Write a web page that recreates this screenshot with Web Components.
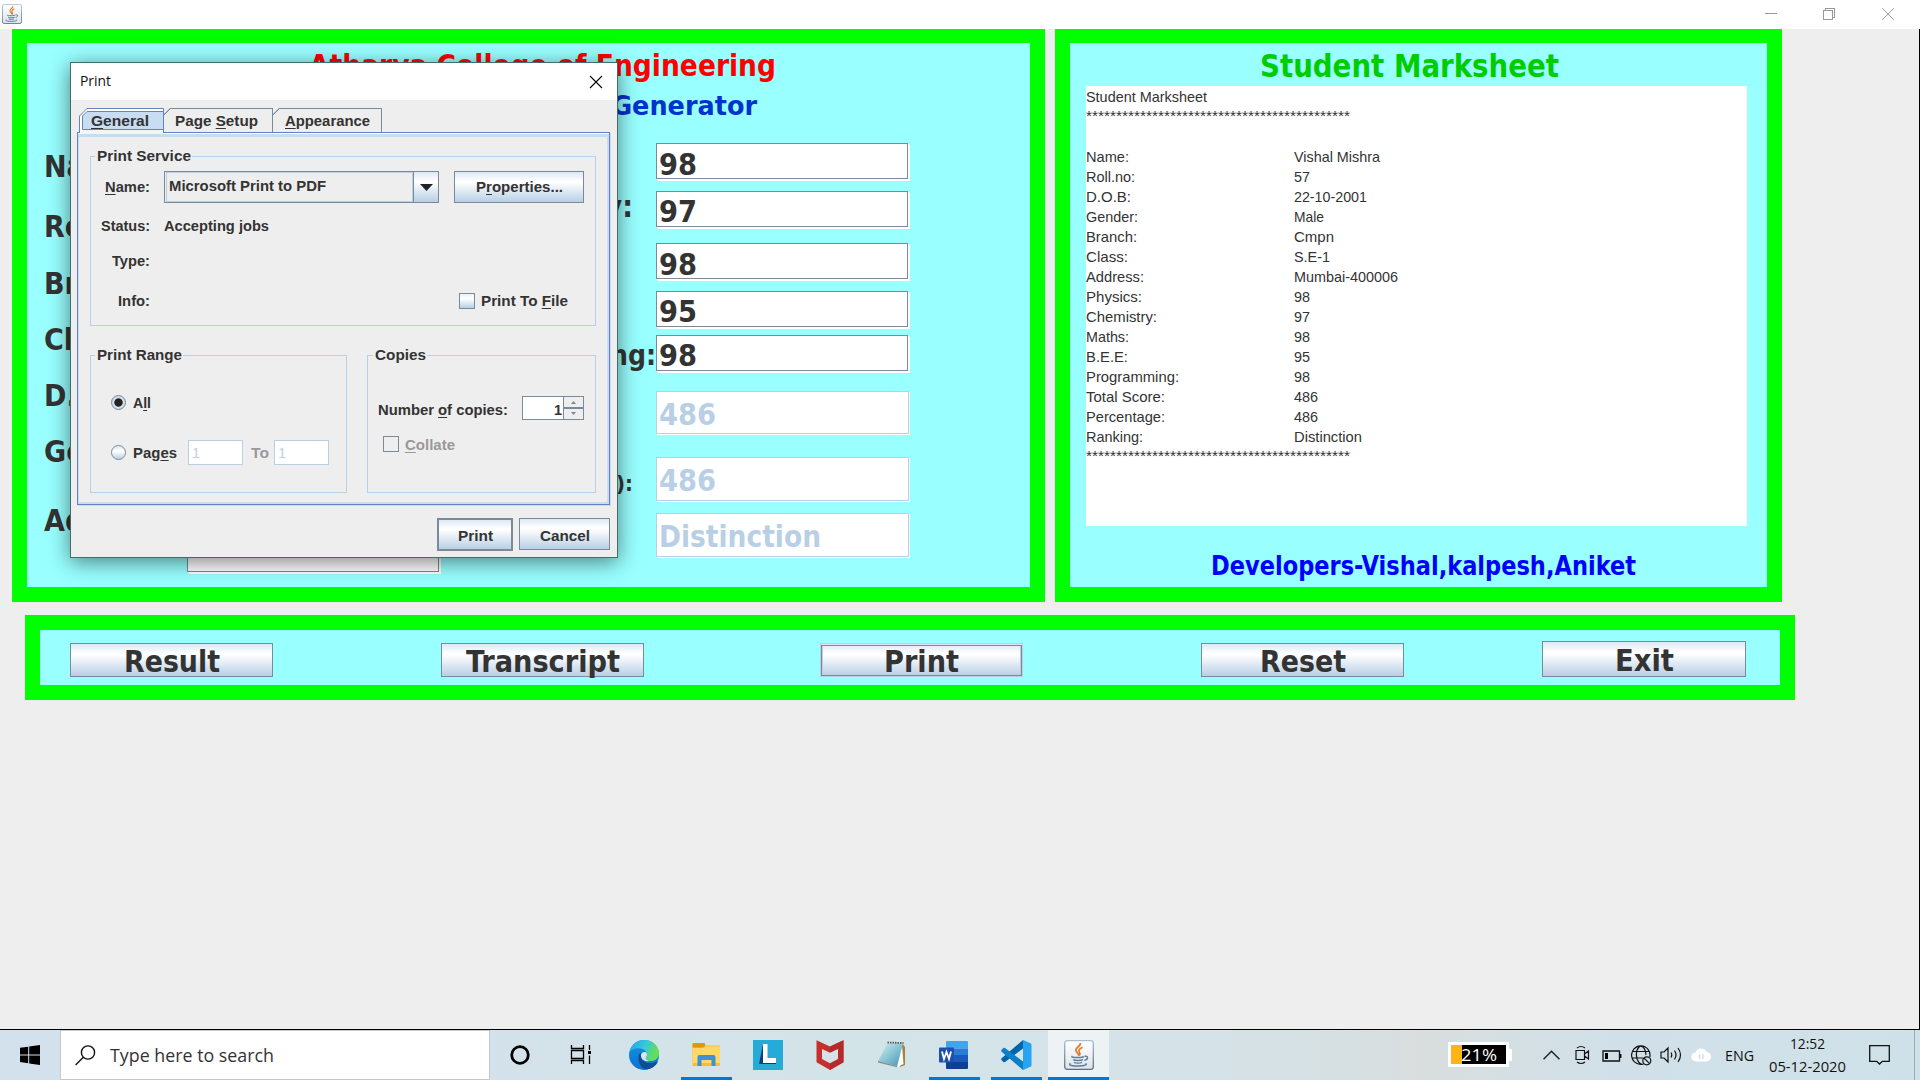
<!DOCTYPE html>
<html lang="en">
<head>
<meta charset="utf-8">
<title>Student Marksheet</title>
<style>
html,body{margin:0;height:100%;overflow:hidden}
body{background:#eee;font-family:"Liberation Sans",Arial,sans-serif;color:#333}
</style>
</head>
<body>
<marks-app></marks-app>
<script>
const define = (name, html, ready) => {
  const t = document.createElement('template');
  t.innerHTML = html;
  customElements.define(name, class extends HTMLElement {
    connectedCallback() {
      if (this.shadowRoot) return;
      this.attachShadow({mode: 'open'}).appendChild(t.content.cloneNode(true));
      if (ready) ready.call(this, this.shadowRoot);
    }
  });
};

/* Text run squeezed or stretched to a fixed advance width (natural width when w is absent). */
define('fit-text', `<style>
:host{display:block;flex:none;height:var(--h,20px);line-height:var(--h,20px);white-space:nowrap}
:host([face=form]){font-family:"DejaVu Sans Condensed","DejaVu Sans",sans-serif;font-stretch:condensed;font-weight:700;--h:30px}
:host([face=bold]){font-weight:700;font-size:15px}
:host([face=ui]){font-family:"Open Sans","Noto Sans",sans-serif;color:#111}
span{display:inline-block;transform-origin:0 50%}
::slotted(u){text-decoration-thickness:1px;text-underline-offset:2px}
</style><span><slot></slot></span>`, function (r) {
  const s = r.querySelector('span');
  if (this.hasAttribute('size')) this.style.fontSize = this.getAttribute('size') + 'px';
  if (!this.hasAttribute('w')) return;
  const w = +this.getAttribute('w');
  this.style.width = w + 'px';
  s.style.transform = 'scaleX(' + w / s.getBoundingClientRect().width + ')';
});

define('java-icon', `<style>:host{display:block;flex:none}svg{display:block;width:100%;height:100%}</style>
<svg viewBox="0 0 30 30"><defs><linearGradient id="g" x2="0" y2="1"><stop stop-color="#fff"/><stop offset="1" stop-color="#dfe3e6"/></linearGradient><linearGradient id="e" x2="0" y2="1"><stop stop-color="#a9bfd0"/><stop offset="1" stop-color="#567087"/></linearGradient></defs>
<rect x=".7" y=".7" width="28.6" height="28.6" rx="2.5" fill="url(#g)" stroke="url(#e)" stroke-width="1.3"/>
<path d="M16.2 3c1.300 2.800-5 4.500-4.300 7.500.3 1.700 2.500 2.800 3.100 5.200M18.600 7.200c-3 1.300-4.600 2.900-3.200 5.200.7 1.100.8 2.200-.4 3.300" fill="none" stroke="#e8792b" stroke-width="1.7"/>
<path d="M8.500 16.300c-2 .9 1.500 1.300 5.500 1.200 3 0 5.500-.5 5.900-.9M9.200 19.700c1.500 1.200 7.500 1.200 9.800 0M10 22.300c2 1 6 1 8 0M20.500 16.300c4-1 4 3.300-.2 3.900M6.500 23.400c-3 1.900 2.500 2.700 8 2.600 6-.1 9.500-1.400 7-2.500" fill="none" stroke="#5b7f9e" stroke-width="1.500"/></svg>`);

define('title-bar', `<style>
:host{display:flex;height:29px;background:#fff;align-items:flex-start}
java-icon{width:20px;height:20px;margin:4px 0 0 2px}
svg{margin:7px 0 0 auto;width:156px;height:16px;display:block}
</style><java-icon></java-icon>
<svg viewBox="0 0 156 16" fill="none" stroke="#999" shape-rendering="crispEdges"><path d="M1 6.500h12M59.500 3.500h9v9h-9zM61.500 3.500v-2h9v9h-2"/><path shape-rendering="auto" d="M118.300 1.300l11.500 11.500M129.800 1.300l-11.500 11.500"/></svg>`);

define('swing-panel', `<style>
:host{display:flex;flex-direction:column;flex:none;box-sizing:border-box;background:#9ff;border:15px solid #0f0}
</style><slot></slot>`);

define('swing-field', `<style>
:host{display:flex;align-items:center;box-sizing:border-box;flex:none;width:252px;height:36px;background:#fff;border:1px solid #7a8a99;box-shadow:1px 1px #fff,2px 2px #fff;padding:8px 0 0 2px;color:#333}
:host([disabled]){border-color:#b8cfe5;color:#b8cfe5;width:253px;height:44px;padding-top:4px;box-shadow:1px 1px #fff}
:host([small]){width:55px;height:25px;padding:1px 0 0 3px;box-shadow:none}
</style><slot></slot>`);

define('swing-button', `<style>
:host{display:flex;align-items:center;justify-content:center;box-sizing:border-box;flex:none;border:1px solid #7a8a99;background:linear-gradient(#dde8f3 0,#fff 30%,#fff 34%,#b8cfe5 100%);color:#333;width:203px;height:34px;padding-top:3px}
:host([focused]){border-color:#b8cfe5;box-shadow:inset 0 1px #dde8f3,inset 0 0 0 1px #7a8a99,inset 0 2px #7a8a99,inset 0 0 0 2px #b8cfe5}
:host([primary]){border-width:2px}
:host([dlg]){height:32px;padding-top:0}
</style><slot></slot>`);

define('group-box', `<style>
:host{display:block;flex:none}
fieldset{margin:0;padding:0;box-sizing:border-box;height:100%;width:100%;min-width:0;border:1.500px solid #b8cfe5;display:block}
legend{padding:0 1px 0 2px;margin-left:var(--tx,5px);height:20px}
.c{display:flex;flex-direction:column}
</style><fieldset><legend><slot name="title"></slot></legend><div class="c"><slot></slot></div></fieldset>`);

define('metal-mark', `<style>:host{display:block;flex:none;box-sizing:border-box;width:16px;height:16px;border:1.500px solid #7a8a99;background:linear-gradient(#eaf1f8,#fff 35%,#b8cfe5)}
:host([off]){background:none}
:host([radio]){width:15px;height:15px;border-radius:50%;border-width:1px;background:linear-gradient(#dde8f3,#fff 40%,#b8cfe5)}
:host([on]){background:radial-gradient(circle,#222 3.800px,#dfe8f1 4.600px,#c8d8e8 6px)}
</style>`);

define('print-dialog', `<style>
:host{display:flex;flex-direction:column;box-sizing:border-box;width:548px;height:496px;background:#eee;border:1px solid #456b6b;box-shadow:0 4px 20px rgba(0,0,0,.5)}
.tb{height:37px;background:#fff;display:flex;align-items:center;padding:0 14px 0 9px;justify-content:space-between}
.tb svg{width:14px;height:14px}
.tb fit-text{margin-top:-3px}
.tabs{display:flex;height:24px;margin:8px 0 0 8px;align-items:stretch;z-index:1}
.tab{box-sizing:border-box;height:24px;border:solid #7a8a99;border-width:1px 1px 0 0;display:flex;align-items:center;justify-content:center;width:109px;background:linear-gradient(135deg,transparent 3.500px,#7a8a99 3.500px,#7a8a99 4.600px,transparent 4.600px);clip-path:polygon(6px 0,100% 0,100% 100%,0 100%,0 6px)}
.on{display:grid;width:85px;height:26px}
.on>*{grid-area:1/1}
.on fit-text{margin:3px 0 0 12px}
.pane{height:373px;width:533px;margin-left:6px;box-sizing:border-box;border:1px solid #6382bf;padding:13px 0 0 12px;box-shadow:inset 0 1px #fff,inset 0 4px #c8ddf2,inset -2px -2px #c8ddf2,inset 1px 0 #c8ddf2,1px 1px #c8ddf2}
.r{display:flex;align-items:center}
.lab{width:46px;display:flex;justify-content:flex-end;margin-left:13px;margin-right:14px}
.combo{display:flex;box-sizing:border-box;width:275px;height:32px;border:1px solid #7a8a99}
.val{flex:1;display:flex;align-items:center;border:1px solid #b8cfe5;margin:0 0 0 1px;padding:0 0 2px 2px}
.arr{width:24px;border-left:1px solid #7a8a99;background:linear-gradient(#dde8f3,#fff 32%,#b8cfe5);display:flex;align-items:center;justify-content:center}
.dis{color:#999}
.spin{display:flex;width:62px;height:24px;box-sizing:border-box;border:1px solid #7a8a99;background:#fff;margin-left:14px}
.num{flex:1;display:flex;justify-content:flex-end;align-items:center;padding-right:1px}
.num fit-text{margin-top:3px}
.ar{width:19px;border-left:1px solid #7a8a99;background:#eee;display:flex;flex-direction:column}
.ar svg{flex:1;width:19px}.ar svg+svg{border-top:2px solid #7a8a99}
.groups{display:flex;gap:20px;margin-top:19px}
.act{display:flex;gap:6px;justify-content:flex-end;margin:13px 7px 0 0}
</style>
<div class="tb"><fit-text face="ui" size="15" w="31">Print</fit-text><svg viewBox="0 0 14 14" stroke="#000" stroke-width="1.100"><path d="M1 1l12 12M13 1L1 13"/></svg></div>
<div class="tabs"><div class="on"><svg width="85" height="26"><path d="M1 25.500V8L8 1H84V25.500z" fill="#fff"/><path d="M3 22h82v4H3z" fill="#f4f4f4"/><path d="M.5 25V8L8 .5H84.500V25" fill="none" stroke="#6382bf"/><path d="M3.500 21.500V8L8 3.500H84.500V21.500z" fill="#c8ddf2" stroke="#6382bf"/></svg><fit-text face="bold" w="58"><u>G</u>eneral</fit-text></div><div class="tab"><fit-text face="bold" w="83" style="margin-left:-3px">Page <u>S</u>etup</fit-text></div><div class="tab"><fit-text face="bold" w="85"><u>A</u>ppearance</fit-text></div></div>
<div class="pane">
<group-box style="width:506px;height:180px;--tx:4px"><fit-text slot="title" face="bold" w="94">Print Service</fit-text>
 <div class="r" style="height:32px;margin-top:5px"><div class="lab"><fit-text face="bold" w="45"><u>N</u>ame:</fit-text></div>
 <div class="combo"><div class="val"><fit-text face="bold" w="157">Microsoft Print to PDF</fit-text></div><div class="arr"><svg width="13" height="7"><path d="M0 0h13l-6.500 7z" fill="#222"/></svg></div></div>
 <swing-button dlg style="width:130px;margin-left:15px"><fit-text face="bold" w="87">P<u>r</u>operties...</fit-text></swing-button></div>
 <div class="r" style="height:20px;margin-top:13px"><div class="lab"><fit-text face="bold" w="49">Status:</fit-text></div><fit-text face="bold" w="105">Accepting jobs</fit-text></div>
 <div class="r" style="height:20px;margin-top:15px"><div class="lab"><fit-text face="bold" w="38">Type:</fit-text></div></div>
 <div class="r" style="height:20px;margin-top:20px"><div class="lab"><fit-text face="bold" w="32">Info:</fit-text></div><metal-mark style="margin-left:295px"></metal-mark><fit-text face="bold" w="87" style="margin-left:6px">Print To <u>F</u>ile</fit-text></div>
</group-box>
<div class="groups">
<group-box style="width:257px;height:148px;--tx:4px"><fit-text slot="title" face="bold" w="85">Print Range</fit-text>
 <div class="r" style="height:20px;margin:27px 0 0 20px"><metal-mark radio on></metal-mark><fit-text face="bold" w="18" style="margin:2px 0 0 7px">A<u>l</u>l</fit-text></div>
 <div class="r" style="height:26px;margin:27px 0 0 20px"><metal-mark radio></metal-mark><fit-text face="bold" w="44" style="margin:2px 11px 0 7px">Pag<u>e</u>s</fit-text><swing-field disabled small><fit-text size="15" w="8">1</fit-text></swing-field><fit-text class="dis" face="bold" w="18" style="margin:2px 5px 0 8px">To</fit-text><swing-field disabled small><fit-text size="15" w="8">1</fit-text></swing-field></div>
</group-box>
<group-box style="width:229px;height:148px"><fit-text slot="title" face="bold" w="51">Copies</fit-text>
 <div class="r" style="height:24px;margin:31px 0 0 10px"><fit-text face="bold" w="130" style="margin-top:3px">Number <u>o</u>f copies:</fit-text><div class="spin"><div class="num"><fit-text face="bold" size="15" w="8">1</fit-text></div><div class="ar"><svg viewBox="0 0 19 10"><path d="M7 7h5l-2.500-3z" fill="#7a8a99"/></svg><svg viewBox="0 0 19 10"><path d="M7 3h5l-2.500 3z" fill="#7a8a99"/></svg></div></div></div>
 <div class="r dis" style="height:20px;margin:14px 0 0 15px"><metal-mark off></metal-mark><fit-text face="bold" w="50" style="margin:1px 0 0 6px"><u>C</u>ollate</fit-text></div>
</group-box></div>
</div>
<div class="act"><swing-button dlg primary style="width:76px;height:33px"><fit-text face="bold" w="35" style="margin-top:2px">Print</fit-text></swing-button><swing-button dlg style="width:91px"><fit-text face="bold" w="50" style="margin:3px 0 0 1px">Cancel</fit-text></swing-button></div>`);

define('mark-sheet', `<style>
:host{display:block;box-sizing:border-box;width:661px;height:440px;background:#fff;padding-top:1px;font-size:15px;line-height:20px;color:#333}
div{display:grid;grid-template-columns:208px 1fr;height:20px}
</style>`, function (r) {
  const stars = '*'.repeat(44);
  const add = h => r.append(document.createRange().createContextualFragment(h));
  add(`<fit-text size="15" w="121">Student Marksheet</fit-text><fit-text size="15" w="264" style="--h:18px;margin-bottom:2px">${stars}</fit-text><div></div>`);
  for (const [k, kw, v, vw] of [['Name:',43,'Vishal Mishra',86],['Roll.no:',49,'57',16],['D.O.B:',45,'22-10-2001',73],['Gender:',52,'Male',30],['Branch:',51,'Cmpn',40],['Class:',42,'S.E-1',36],['Address:',58,'Mumbai-400006',104],['Physics:',56,'98',16],['Chemistry:',71,'97',16],['Maths:',43,'98',16],['B.E.E:',42,'95',16],['Programming:',93,'98',16],['Total Score:',79,'486',24],['Percentage:',79,'486',24],['Ranking:',57,'Distinction',68]])
    add(`<div><fit-text size="15" w="${kw}">${k}</fit-text><fit-text size="15" w="${vw}">${v}</fit-text></div>`);
  add(`<fit-text size="15" w="264" style="--h:18px">${stars}</fit-text>`);
});

define('task-bar', `<style>
:host{display:flex;height:50px;background:linear-gradient(90deg,#d2e1eb 0,#d4e3ea 32%,#d3e4e8 45%,#d5e3e8 60%,#d6e0e3 70%,#d9dddd 74%,#d5dfe2 78%,#d1e0e8 84%,#cfe1e8 100%)}
svg{display:block;flex:none}
.s{width:60px;padding:15px 0 0 20px;box-sizing:border-box}
.q{box-sizing:border-box;width:430px;height:50px;background:#fff;border:1px solid #c4c8ca;display:flex;align-items:center;padding-left:14px}
.a{box-sizing:border-box;width:62px;height:50px;display:flex;justify-content:center;padding-top:10px;flex:none}
.a.u{background:linear-gradient(#0078d7,#0078d7) 50% 100%/51px 3px no-repeat}
.a.j{width:61px;background:linear-gradient(#0078d7,#0078d7) 0 100%/100% 3px no-repeat,#edf2f5}
.a java-icon{width:30px;height:30px}
.tray{display:flex;margin-left:auto;align-items:center}
.bat{width:61px;height:25px;box-sizing:border-box;border:3px solid #fff;background:linear-gradient(90deg,#fdb515 11px,#000 11px);display:flex;align-items:center;padding-left:10px;position:relative;margin-bottom:1px}
.bat::after{content:"";position:absolute;right:-6px;top:4px;width:3px;height:12px;background:#fff}
.clk{display:flex;flex-direction:column;align-items:center;width:78px}
.end{width:5px;height:50px;border-left:1px solid #9aabb3}
</style>
<div class="s"><svg width="20" height="20" viewBox="0 0 20 20"><path d="M0 2.800l8.200-1.100v7.700H0zM9.200 1.500L20 0v9.400H9.200zM0 10.400h8.200v7.800L0 17zM9.200 10.400H20V20L9.200 18.400z"/></svg></div>
<div class="q"><svg width="21" height="21" viewBox="0 0 21 21" fill="none" stroke="#111" stroke-width="1.400"><circle cx="13" cy="7.500" r="6.600"/><path d="M8.300 12.200L.6 20"/></svg><fit-text face="ui" size="19" w="164" style="margin-left:14px;--h:24px;color:#333">Type here to search</fit-text></div>
<div class="a" style="width:60px"><svg width="22" height="30" viewBox="0 0 22 30"><circle cx="11" cy="15" r="8.300" fill="none" stroke="#000" stroke-width="2.800"/></svg></div>
<div class="a" style="width:61px"><svg width="22" height="30" viewBox="0 0 22 30" fill="none" stroke="#000" stroke-width="1.300"><path d="M1.500 5v3.500h12V5M1.500 24v-3.500h12V24M1.500 10.500h12v8h-12zM19.500 5v5M19.500 15.500V24"/><path d="M18 11h3v3h-3z" fill="#000" stroke="none"/></svg></div>
<div class="a" style="width:64px;padding-left:1px"><svg width="30" height="30" viewBox="0 0 30 30"><defs><linearGradient id="ea" x2="1" y2=".3"><stop stop-color="#1ba7e5"/><stop offset=".55" stop-color="#35c8dc"/><stop offset="1" stop-color="#69df50"/></linearGradient><linearGradient id="eb" x2="0" y2="1"><stop stop-color="#1691df"/><stop offset="1" stop-color="#0874d3"/></linearGradient></defs><circle cx="15" cy="15" r="15" fill="url(#eb)"/><path d="M.7 12C2.200 4.500 8 0 15.200 0 24 0 30 6.300 30 13c0 5.500-4 8-8.500 8-3.500 0-5.500-1-5-2.600 1.500-2.300 2.200-4 .8-6.400C14.800 7.500 5 6.500.7 12z" fill="url(#ea)"/><path d="M11.500 12.500c-4 3-2.500 15.500 6.500 17 5-.7 8.500-3.500 10.500-7 .4-.9-.3-1.200-1-.8-6 3-14 .8-15.500-5-.4-1.500-.4-2.800-.5-4.200z" fill="#114d94"/><path d="M12 15.200c.2-2 1.800-3.500 4-3.100 2.500.5 2.500 3.500.8 5.600-.8 1.400 1.200 3 3.700 3.300-4.500 1-8.700-1.500-8.500-5.800z" fill="#d8e8ee"/></svg></div>
<div class="a u"><svg width="29" height="30" viewBox="0 0 29 30"><path d="M.5 4q0-1 1-1H12l2 2.500H27q1 0 1 1V25q0 1-1 1H1.500q-1 0-1-1z" fill="#f9bd34"/><path d="M.5 4q0-1 1-1H12q1 0 1 1v2l-2 1.500H.5z" fill="#df9908"/><path d="M.5 8h11l2-1.500H28V23H.5z" fill="#ffd869"/><path d="M5.500 17q0-2 2-2h14q2 0 2 2v9h-4v-6h-10v6h-4z" fill="#3e91d2"/></svg></div>
<div class="a"><svg width="30" height="30" viewBox="0 0 30 30"><path d="M0 0h30v30H0z" fill="#26abd9"/><path d="M10 4L6 24l4.500-2z" fill="#123c75"/><path d="M6 24l4-2h13v2z" fill="#123c75"/><path d="M10 4h4.500v14H23v5H10z" fill="#fff"/></svg></div>
<div class="a"><svg width="28" height="30" viewBox="0 0 28 30"><path d="M.5.300L14 6.500 27.500.3v22L14 30 .5 22.300z" fill="#c5302f"/><path d="M14 6.500L27.500.3v22L14 30z" fill="#b52a2b"/><path d="M6 9l8 3.800L22 9v10l-8 4.200L6 19z" fill="#d5e2e8"/></svg></div>
<div class="a"><svg width="30" height="30" viewBox="0 0 30 30"><defs><linearGradient id="n" x2="1" y2="1"><stop stop-color="#d6f0f4"/><stop offset=".6" stop-color="#7bbccc"/><stop offset="1" stop-color="#3e93a9"/></linearGradient></defs><path d="M25 3l3 4v18l-5 2z" fill="#a77f40"/><path d="M25 5l1.500 19-6 3z" fill="#fff"/><path d="M10.500 3L26 3.500 20 26 1 21z" fill="url(#n)"/><path d="M1 21l19 5v1.200L1 22.500z" fill="#7d8f98"/><path d="M10.500 2.500L26.500 3" stroke="#555" stroke-width="1.800" stroke-dasharray="1.500 1"/></svg></div>
<div class="a u"><svg width="30" height="30" viewBox="0 0 30 30"><path d="M7 2q0-1 1-1h20q1 0 1 1v6.500H7z" fill="#41a5ee"/><path d="M7 8.500h22V15H7z" fill="#2b7cd3"/><path d="M7 15h22v7H7z" fill="#185abd"/><path d="M7 22h22v6q0 1-1 1H8q-1 0-1-1z" fill="#103f91"/><rect y="7.500" width="15" height="15" rx="1" fill="#1d50ac"/><path d="M3 11.500l2 7.500 2.500-7 2.500 7 2-7.500" fill="none" stroke="#fff" stroke-width="1.800"/></svg></div>
<div class="a u"><svg width="31" height="30" viewBox="0 0 31 30"><path d="M22 0l7.500 3.300q1 .5 1 1.500v20.500q0 1-1 1.500L22 30z" fill="#27a4ef"/><path d="M22 0v8.500L4 22l-1.300.2L.3 20v-1.500z" fill="#0065a9"/><path d="M22 30v-8.500L4 8l-1.300-.2L.3 10v1.500z" fill="#0c7fc9"/></svg></div>
<div class="a j" style="margin-left:1px"><java-icon></java-icon></div>
<div class="tray">
<div class="bat"><fit-text face="ui" size="17" w="36" style="color:#fff">21%</fit-text></div>
<svg width="17" height="10" viewBox="0 0 17 10" style="margin:0 15px 0 34px" fill="none" stroke="#222" stroke-width="1.500"><path d="M.5 9.300l8-8 8 8"/></svg>
<svg width="15" height="20" viewBox="0 0 15 20" fill="none" stroke="#111" stroke-width="1.200"><path d="M1 5.500h8.500v9H1zM9.500 9l4-3v8l-4-3M2 3q4-3 8 0M2 17q4 3 8 0"/></svg>
<svg width="20" height="12" viewBox="0 0 20 12" style="margin:2px 9px 0 12px" fill="none" stroke="#111" stroke-width="1.300"><path d="M1 1h16.500v10H1zM18.800 4v4"/><path d="M3 3h3v6H3z" fill="#000" stroke="none"/></svg>
<svg width="21" height="21" viewBox="0 0 21 21" fill="none" stroke="#111" stroke-width="1.200"><path d="M13 18.700A9.200 9.200 0 1 1 18.800 12M12 19.200q-2 .6-4-1.700c-3.500-4-3.500-12 0-15.500q2-1.700 4 0c2 2 2.900 5 2.900 8M1.800 6.500h16.500M1 13h11"/><circle cx="15.800" cy="15.800" r="4"/><path d="M13 13l5.600 5.600"/></svg>
<svg width="22" height="18" viewBox="0 0 22 18" style="margin:0 9px 0 8px" fill="none" stroke="#111" stroke-width="1.200"><path d="M1 6h3l4-4v14l-4-4H1zM11 6.500q1.500 2.500 0 5M14.500 4.500q3 4.500 0 9M18 2q5 7 0 14"/></svg>
<svg width="21" height="14" viewBox="0 0 21 14"><path d="M5 13.500a4.500 4.500 0 0 1-.5-9A6 6 0 0 1 15.700 4a4.800 4.800 0 0 1 .3 9.500z" fill="#fff"/><path d="M8.500 6v5M12 6v5" stroke="#d3e1e8" stroke-width="1.500"/></svg>
<fit-text face="ui" size="15" w="29" style="margin:0 14px 0 13px">ENG</fit-text>
<div class="clk"><fit-text face="ui" size="15" w="35" style="--h:23px">12:52</fit-text><fit-text face="ui" size="15" w="77" style="--h:23px">05-12-2020</fit-text></div>
<svg width="21" height="21" viewBox="0 0 21 21" style="margin:1px 24px 0 23px" fill="none" stroke="#111" stroke-width="1.300"><path d="M.7.700h19.600v15.600h-7L10.500 19l-2.800-2.700h-7z"/></svg>
<div class="end"></div></div>`);

define('marks-app', `<style>
:host{display:flex;flex-direction:column;width:1920px;height:1080px;background:#eee;position:relative}
.desk{box-sizing:border-box;border-right:1px solid #000;border-bottom:1px solid #000;height:1001px}
.top{display:flex;gap:10px;margin-left:12px}
.top swing-panel{height:573px;border-top-width:14px}
.l{width:1033px}.r{width:727px}
.body{display:flex}
.labels{width:143px;margin-left:17px}
.addr{width:252px;margin-top:415px}
.mid{width:217px;display:flex;flex-direction:column;align-items:flex-end}
.bar{width:1770px;height:85px;margin:13px 0 0 25px}
.btns{display:flex;align-items:flex-end;height:47px;padding-left:30px}
print-dialog{position:absolute;left:70px;top:62px}
</style>
<title-bar></title-bar>
<div class="desk">
<div class="top">
<swing-panel class="l">
 <fit-text face="form" size="30" w="467" style="color:#f00;margin:8px 0 0 282px">Atharva College of Engineering</fit-text>
 <fit-text face="form" size="27" w="307" style="color:#0032cc;margin:10px 0 0 423px">Marksheet Generator</fit-text>
 <div class="body">
 <div class="labels">
  <fit-text face="form" size="30" style="margin-top:31px">Na</fit-text>
  <fit-text face="form" size="30" style="margin-top:30px">Ro</fit-text>
  <fit-text face="form" size="30" style="margin-top:27px">Br</fit-text>
  <fit-text face="form" size="30" style="margin-top:26px">Cl</fit-text>
  <fit-text face="form" size="30" style="margin-top:26px">D.</fit-text>
  <fit-text face="form" size="30" style="margin-top:26px">Ge</fit-text>
  <fit-text face="form" size="30" style="margin-top:39px">Ad</fit-text>
 </div>
 <div class="addr"><swing-field></swing-field></div>
 <div class="mid">
  <fit-text face="form" size="30" style="margin:71px 23px 0 0">y:</fit-text>
  <fit-text face="form" size="28" style="margin:119px 0 0 0">ng:</fit-text>
  <fit-text face="form" size="22" style="margin:98px 23px 0 0">):</fit-text>
 </div>
 <div>
  <swing-field style="margin-top:22px"><fit-text face="form" size="30" w="38">98</fit-text></swing-field>
  <swing-field style="margin-top:12px;padding-top:6px"><fit-text face="form" size="30" w="38">97</fit-text></swing-field>
  <swing-field style="margin-top:16px"><fit-text face="form" size="30" w="38">98</fit-text></swing-field>
  <swing-field style="margin-top:12px;padding-top:6px"><fit-text face="form" size="30" w="38">95</fit-text></swing-field>
  <swing-field style="margin-top:8px;padding-top:6px"><fit-text face="form" size="30" w="38">98</fit-text></swing-field>
  <swing-field disabled style="margin-top:20px;height:43px;padding-top:5px"><fit-text face="form" size="30" w="57">486</fit-text></swing-field>
  <swing-field disabled style="margin-top:23px"><fit-text face="form" size="30" w="57">486</fit-text></swing-field>
  <swing-field disabled style="margin-top:12px"><fit-text face="form" size="30" w="162">Distinction</fit-text></swing-field>
 </div>
 </div>
</swing-panel>
<swing-panel class="r">
 <fit-text face="form" size="32" w="299" style="color:#00cd00;margin:8px 0 5px 190px">Student Marksheet</fit-text>
 <mark-sheet style="margin-left:16px"></mark-sheet>
 <fit-text face="form" size="26" w="425" style="color:#00f;margin:25px 0 0 141px">Developers-Vishal,kalpesh,Aniket</fit-text>
</swing-panel>
</div>
<swing-panel class="bar"><div class="btns">
 <swing-button><fit-text face="form" size="30" w="96">Result</fit-text></swing-button>
 <swing-button style="margin-left:168px"><fit-text face="form" size="30" w="154">Transcript</fit-text></swing-button>
 <swing-button focused style="margin-left:176px"><fit-text face="form" size="30" w="75">Print</fit-text></swing-button>
 <swing-button style="margin-left:178px"><fit-text face="form" size="30" w="86">Reset</fit-text></swing-button>
 <swing-button style="margin-left:138px;width:204px;height:36px"><fit-text face="form" size="30" w="59">Exit</fit-text></swing-button>
</div></swing-panel>
</div>
<task-bar></task-bar>
<print-dialog></print-dialog>`);
</script>
</body>
</html>
